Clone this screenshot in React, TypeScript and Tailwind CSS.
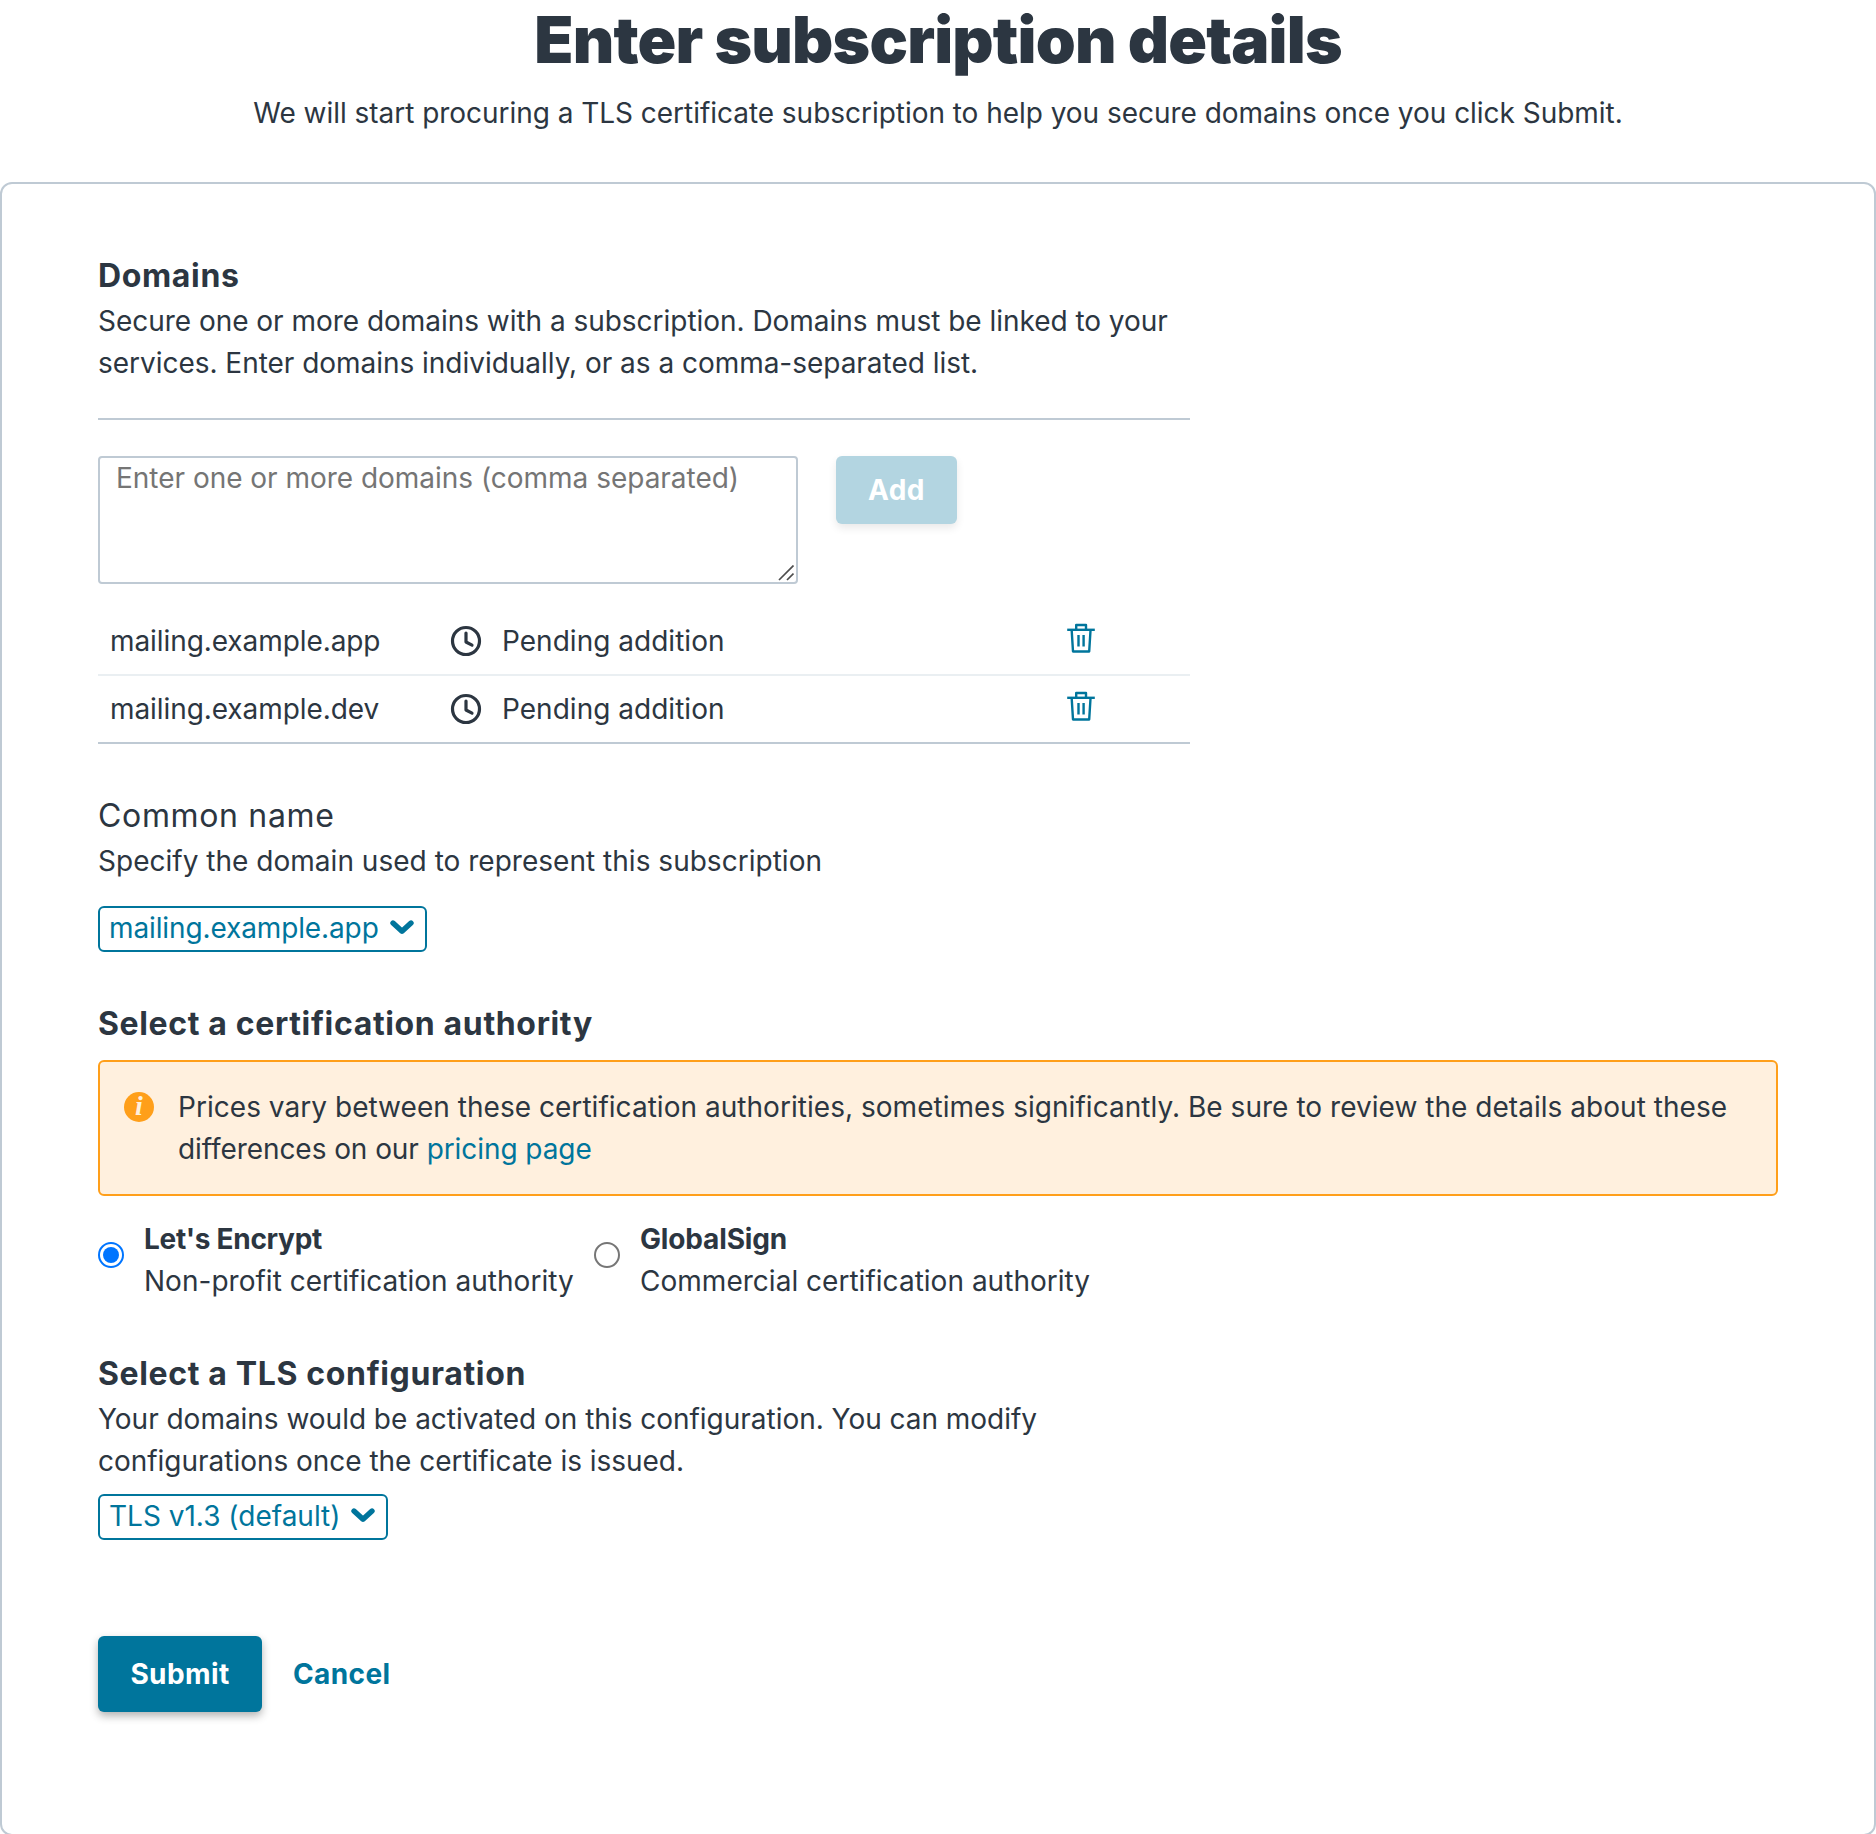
import { useState } from "react";
import type { ReactNode } from "react";

const initialDomains = ["mailing.example.app", "mailing.example.dev"];

const authorities = [
  {
    id: "lets-encrypt",
    name: "Let's Encrypt",
    nameTracking: "tracking-[-0.3px]",
    detail: "Non-profit certification authority",
    width: "w-[450px]",
  },
  {
    id: "globalsign",
    name: "GlobalSign",
    nameTracking: "tracking-[-0.15px]",
    detail: "Commercial certification authority",
    width: "w-[470px]",
  },
];

function ClockIcon() {
  return (
    <svg className="size-8 shrink-0" viewBox="0 0 32 32" fill="none" stroke="currentColor" aria-hidden="true">
      <circle cx="16" cy="16" r="13.5" strokeWidth="3.2" />
      <path d="M16 8v9l6 3.2" strokeWidth="3.2" strokeLinecap="round" strokeLinejoin="round" />
    </svg>
  );
}

function TrashIcon() {
  return (
    <svg className="h-8 w-7" viewBox="0 0 28 32" fill="none" stroke="currentColor" strokeWidth="2.4" aria-hidden="true">
      <path d="M0.2 7.8h27.6" />
      <path d="M9.2 8V3h9.8v5" strokeLinejoin="round" />
      <path d="M4.7 8.5l1.3 21h16.2l1.3-21" strokeLinejoin="round" />
      <path d="M11.5 13v11.4M16.6 13v11.4" />
    </svg>
  );
}

function ChevronIcon() {
  return (
    <svg className="mt-3 h-4 w-6 shrink-0" viewBox="0 0 24 16" fill="none" stroke="currentColor" aria-hidden="true">
      <path d="M3 3l9 8.2L21 3" strokeWidth="5.4" strokeLinecap="round" strokeLinejoin="round" />
    </svg>
  );
}

function InfoIcon() {
  return (
    <span className="mt-[6px] flex size-[30px] shrink-0 items-center justify-center rounded-full bg-[#ff9f1a] font-['Liberation_Serif',serif] text-[28px] leading-[30px] font-bold text-[#fff0de] italic">
      <span className="-mt-[2px]">i</span>
    </span>
  );
}

function SectionTitle({ children, light = false }: { children: ReactNode; light?: boolean }) {
  return (
    <h2
      className={
        light
          ? "text-[32px] leading-[48px] font-normal tracking-[0.66px]"
          : "text-[32px] leading-[48px] font-bold tracking-[0.64px]"
      }
    >
      {children}
    </h2>
  );
}

function Dropdown({ label, className }: { label: string; className: string }) {
  return (
    <button
      type="button"
      className={`flex h-[46px] items-start justify-between rounded-md border-2 border-[#00759c] pr-[11px] pl-[9px] text-[#00759c] ${className}`}
    >
      <span className="leading-[40px] whitespace-nowrap">{label}</span>
      <ChevronIcon />
    </button>
  );
}

export default function App() {
  const [domains, setDomains] = useState(initialDomains);
  const [authority, setAuthority] = useState("lets-encrypt");

  return (
    <div className="h-[1834px] w-full overflow-hidden bg-white font-[Inter,sans-serif] text-[28px] leading-[42px] text-[#2c3641]">
      <header className="flex flex-col items-center gap-3 pb-12 text-center">
        <h1 className="text-[64px] leading-[80px] font-black tracking-[-0.8px]">Enter subscription details</h1>
        <p className="tracking-[-0.035px]">
          We will start procuring a TLS certificate subscription to help you secure domains once you click Submit.
        </p>
      </header>

      <main className="h-[1654px] rounded-xl border-2 border-[#bfcad4] px-24 pt-[68px]">
        <section className="w-[1092px]">
          <SectionTitle>Domains</SectionTitle>
          <p className="tracking-[-0.03px]">
            Secure one or more domains with a subscription. Domains must be linked to your
            <br />
            services. Enter domains individually, or as a comma-separated list.
          </p>
          <hr className="mt-[34px] border-t-2 border-[#bfcad4]" />

          <div className="mt-9 flex items-start gap-[38px]">
            <div className="relative h-32 w-[700px]">
              <textarea
                className="block h-full w-full resize-none rounded-[4px] border-2 border-[#bfcad4] px-4 py-[3px] leading-[34px] tracking-[-0.02px] outline-none placeholder:text-[#757575] placeholder:opacity-100"
                placeholder="Enter one or more domains (comma separated)"
              />
              <svg
                className="pointer-events-none absolute right-[4px] bottom-[3px] size-4"
                viewBox="0 0 16 16"
                fill="none"
                stroke="#4d4d4d"
                strokeWidth="1.7"
                aria-hidden="true"
              >
                <path d="M1 15L15.5 0.5M9 15l6.5-6.5" />
              </svg>
            </div>
            <button
              type="button"
              disabled
              className="h-[68px] w-[121px] rounded-md bg-[#b3d5e1] leading-[34px] font-bold tracking-[0.4px] text-white shadow-[0_4px_8px_rgba(0,0,0,0.09)]"
            >
              Add
            </button>
          </div>

          <ul className="mt-6 border-b-2 border-[#bfcad4]">
            {domains.map((domain, index) => (
              <li
                key={domain}
                className={`flex items-start py-3 pl-3 ${index > 0 ? "border-t-2 border-[#eaeff2]" : ""}`}
              >
                <span className="w-[340px] tracking-[-0.08px]">{domain}</span>
                <span className="flex w-[617px] gap-5">
                  <span className="pt-[5px]">
                    <ClockIcon />
                  </span>
                  <span className="tracking-[0.02px]">Pending addition</span>
                </span>
                <button
                  type="button"
                  aria-label={`Remove ${domain}`}
                  className="pt-[2px] text-[#00759c]"
                  onClick={() => setDomains(domains.filter((d) => d !== domain))}
                >
                  <TrashIcon />
                </button>
              </li>
            ))}
          </ul>
        </section>

        <section className="mt-12">
          <SectionTitle light>Common name</SectionTitle>
          <p className="tracking-[0.02px]">Specify the domain used to represent this subscription</p>
          <Dropdown label="mailing.example.app" className="mt-6 w-[329px] tracking-[-0.12px]" />
        </section>

        <section className="mt-12">
          <SectionTitle>Select a certification authority</SectionTitle>
          <div className="mt-3 flex gap-6 rounded-md border-2 border-[#ff9f1a] bg-[#fff0de] p-6">
            <InfoIcon />
            <p className="tracking-[0.035px]">
              Prices vary between these certification authorities, sometimes significantly. Be sure to review the details
              about these
              <br />
              <span className="tracking-[-0.07px]">
                differences on our{" "}
                <a href="#pricing" className="text-[#00759c]">
                  pricing page
                </a>
              </span>
            </p>
          </div>

          <div className="mt-[22px] flex gap-[46px]">
            {authorities.map(({ id, name, nameTracking, detail, width }) => (
              <label key={id} className={`flex gap-5 ${width}`}>
                <input
                  type="radio"
                  name="authority"
                  className="mt-6 size-[26px] shrink-0 appearance-none rounded-full border-2 border-[#767676] bg-white bg-clip-content p-[3px] checked:border-[#0075ff] checked:bg-[#0075ff]"
                  checked={authority === id}
                  onChange={() => setAuthority(id)}
                />
                <span className="flex flex-col whitespace-nowrap">
                  <strong className={`font-bold ${nameTracking}`}>{name}</strong>
                  <span className="tracking-[0.02px]">{detail}</span>
                </span>
              </label>
            ))}
          </div>
        </section>

        <section className="mt-12">
          <SectionTitle>Select a TLS configuration</SectionTitle>
          <p className="tracking-[-0.025px]">
            Your domains would be activated on this configuration. You can modify
            <br />
            configurations once the certificate is issued.
          </p>
          <Dropdown label="TLS v1.3 (default)" className="mt-3 w-[290px]" />
        </section>

        <div className="mt-24 flex items-center gap-8">
          <button
            type="button"
            className="h-[76px] w-[164px] rounded-md bg-[#00759c] font-bold tracking-[0.4px] text-white shadow-[0_4px_8px_rgba(0,0,0,0.3)]"
          >
            Submit
          </button>
          <button type="button" className="-ml-px font-bold tracking-[0.4px] text-[#00759c]">
            Cancel
          </button>
        </div>
      </main>
    </div>
  );
}
